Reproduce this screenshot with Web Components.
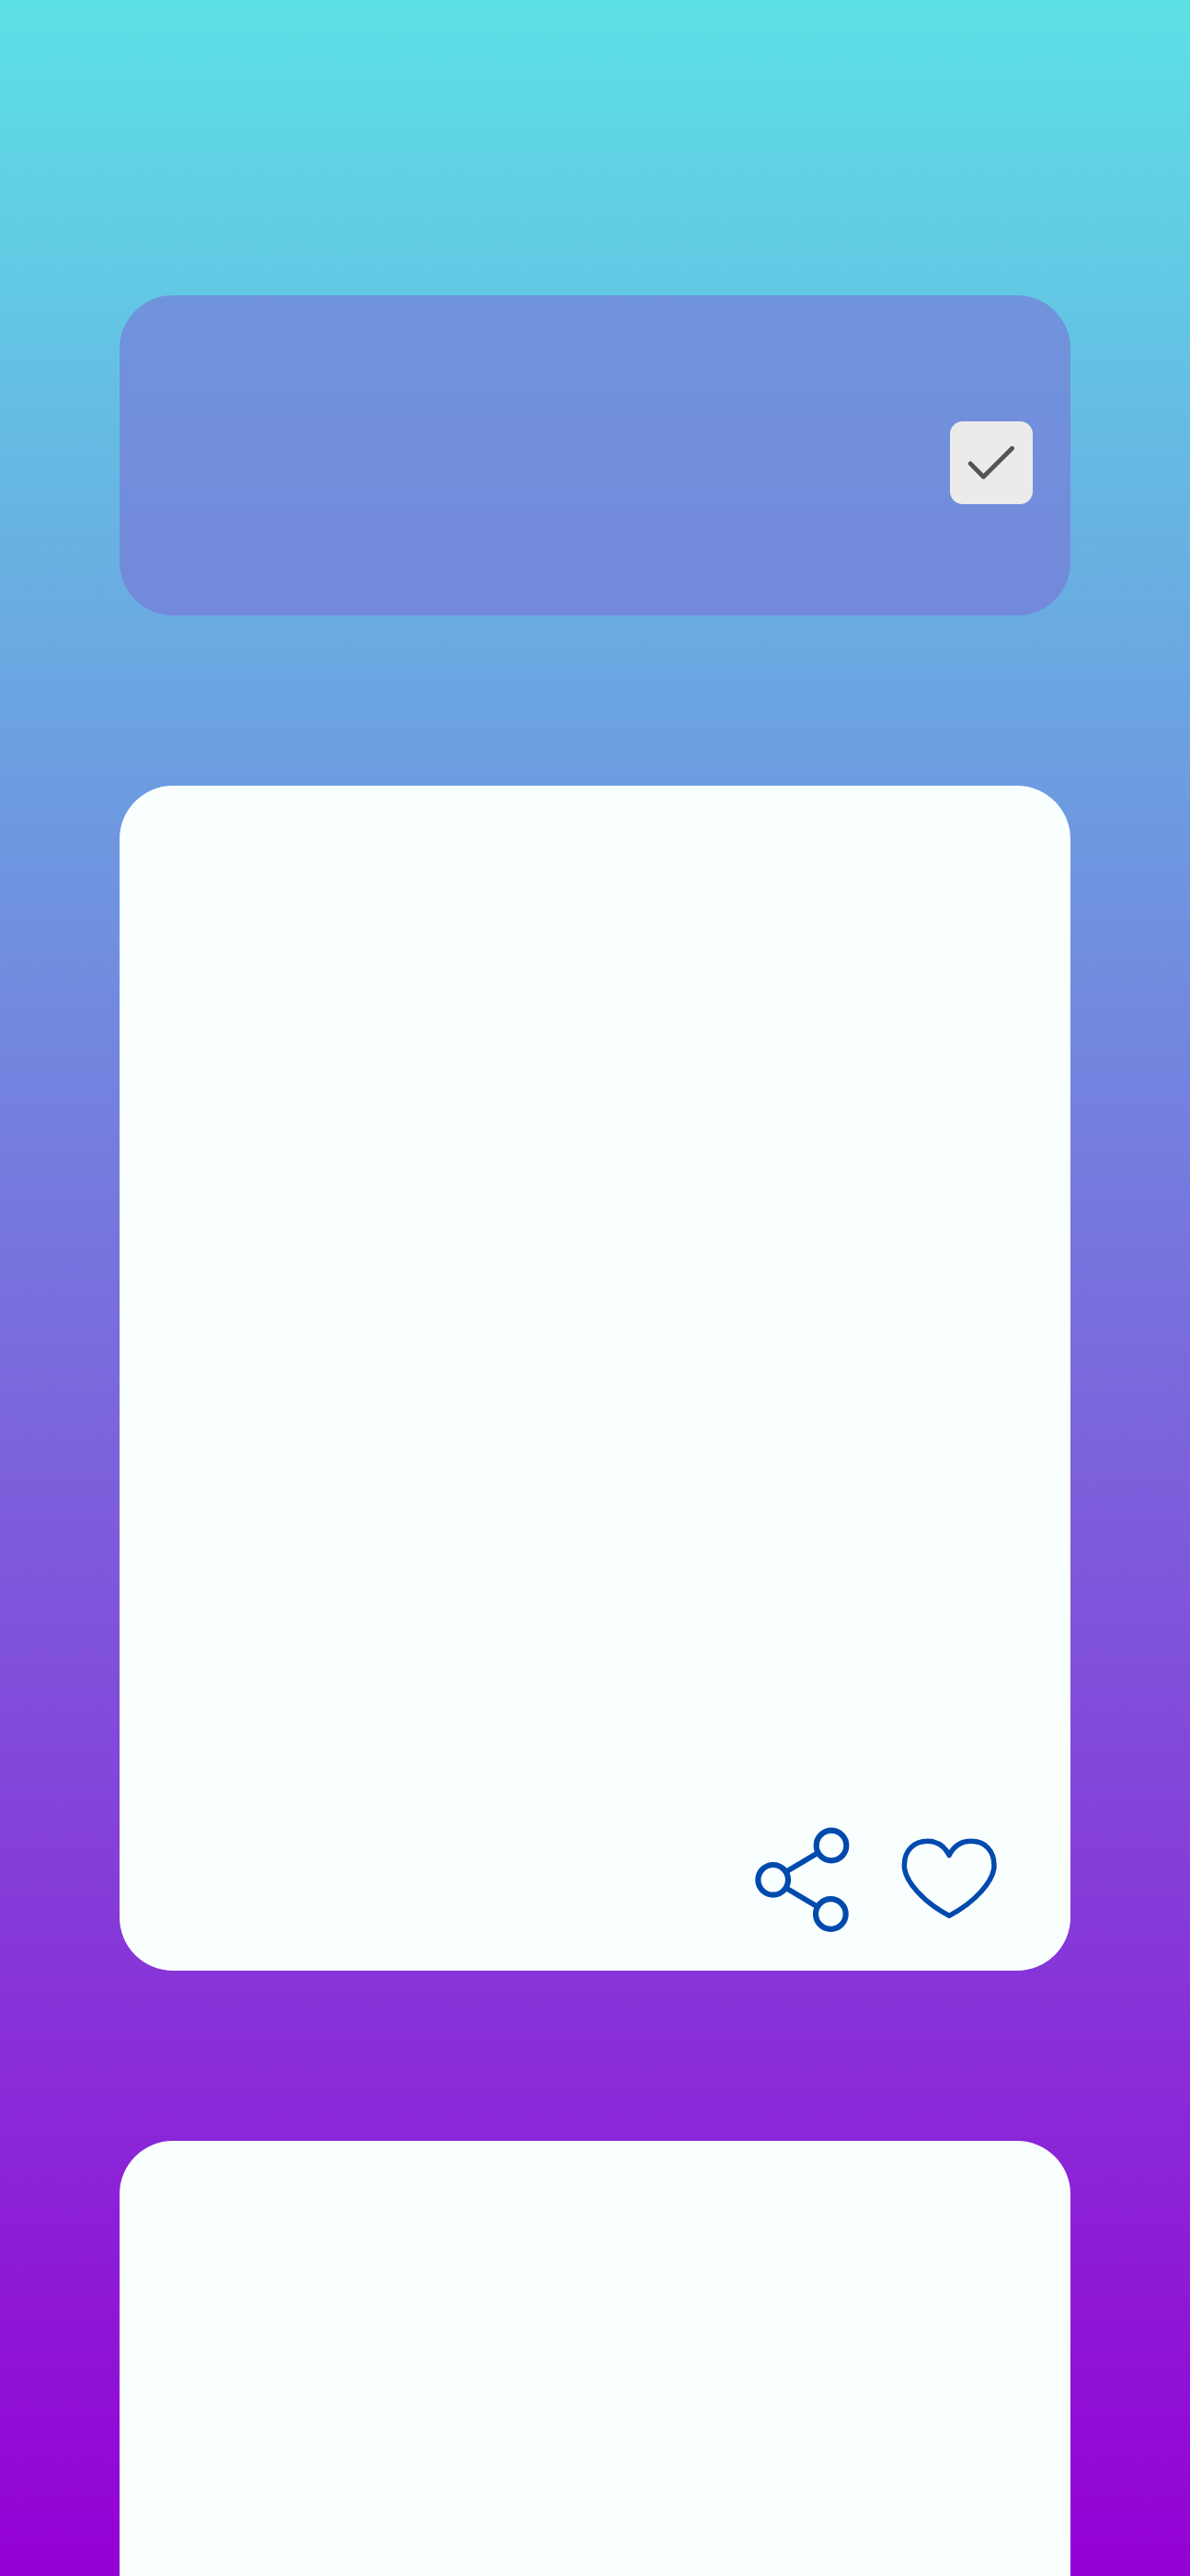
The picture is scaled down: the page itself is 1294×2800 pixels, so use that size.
<!DOCTYPE html>
<html lang="en">
<head>
<meta charset="utf-8">
<title>Feed</title>
<style>html,body{margin:0;padding:0}body{font-family:"Open Sans",sans-serif}</style>
</head>
<body>
<feed-screen>
  <feed-panel kind="header"><check-box></check-box></feed-panel>
  <feed-panel kind="post"><share-icon></share-icon><heart-icon></heart-icon></feed-panel>
  <feed-panel kind="next"></feed-panel>
</feed-screen>
<script>
const define = (name, html) => customElements.define(name, class extends HTMLElement {
  constructor() {
    super();
    this.attachShadow({mode: 'open'}).innerHTML = html;
  }
});

define('feed-screen', `<style>
:host{display:flex;flex-direction:column;gap:184.5px;box-sizing:border-box;height:2800px;overflow:hidden;
padding:321px 130px 0;background:linear-gradient(180deg,#5ce1e6,#9400d4)}
</style><slot></slot>`);

define('feed-panel', `<style>
:host{display:flex;flex:none;box-sizing:border-box;border-radius:58px;background:#f9ffff;justify-content:flex-end}
:host([kind=header]){height:348px;background:rgba(121,117,214,.62);padding:137.3px 41px 0 0;align-items:flex-start}
:host([kind=post]){height:1288.5px;padding:0 80px 42px 0;gap:54.7px;align-items:flex-end}
:host([kind=next]){flex:1;margin-top:.5px;border-radius:58px 58px 0 0}
</style><slot></slot>`);

define('check-box', `<style>
:host{display:block;width:90px;height:90px;border-radius:14px;background:#ebebeb}
svg{display:block}
</style><svg width="90" height="90" viewBox="0 0 90 90"><path d="M22.200 45.900 36.400 60.300 67.600 29.200" fill="none" stroke="#545454" stroke-width="4.800" stroke-linecap="round" stroke-linejoin="round"/></svg>`);

/* Both icons are drawn at three units per pixel. */
define('share-icon', `<style>:host{display:block}svg{display:block}</style>
<svg width="104" height="114" viewBox="34 48 312 342" fill="none" stroke="#004aad">
<path d="M138 192 239 132M138 248 239 308" stroke-width="17.5"/>
<g stroke-width="18.500"><circle cx="93" cy="220" r="49"/><circle cx="283" cy="108" r="49"/><circle cx="281" cy="331.500" r="49"/></g></svg>`);

define('heart-icon', `<style>:host{display:block;padding-bottom:14px}svg{display:block}</style>
<svg width="104" height="88" viewBox="60 54 312 264"><path d="M216.500 110C203 82 179 64 146 64C101 64 70 94 70 143C70 194 134 264 216.500 307C299 264 363 194 363 143C363 94 332 64 289 64C255 64 230 82 216.500 110Z" fill="none" stroke="#004aad" stroke-width="16.500" stroke-linejoin="round"/></svg>`);
</script>
</body>
</html>
